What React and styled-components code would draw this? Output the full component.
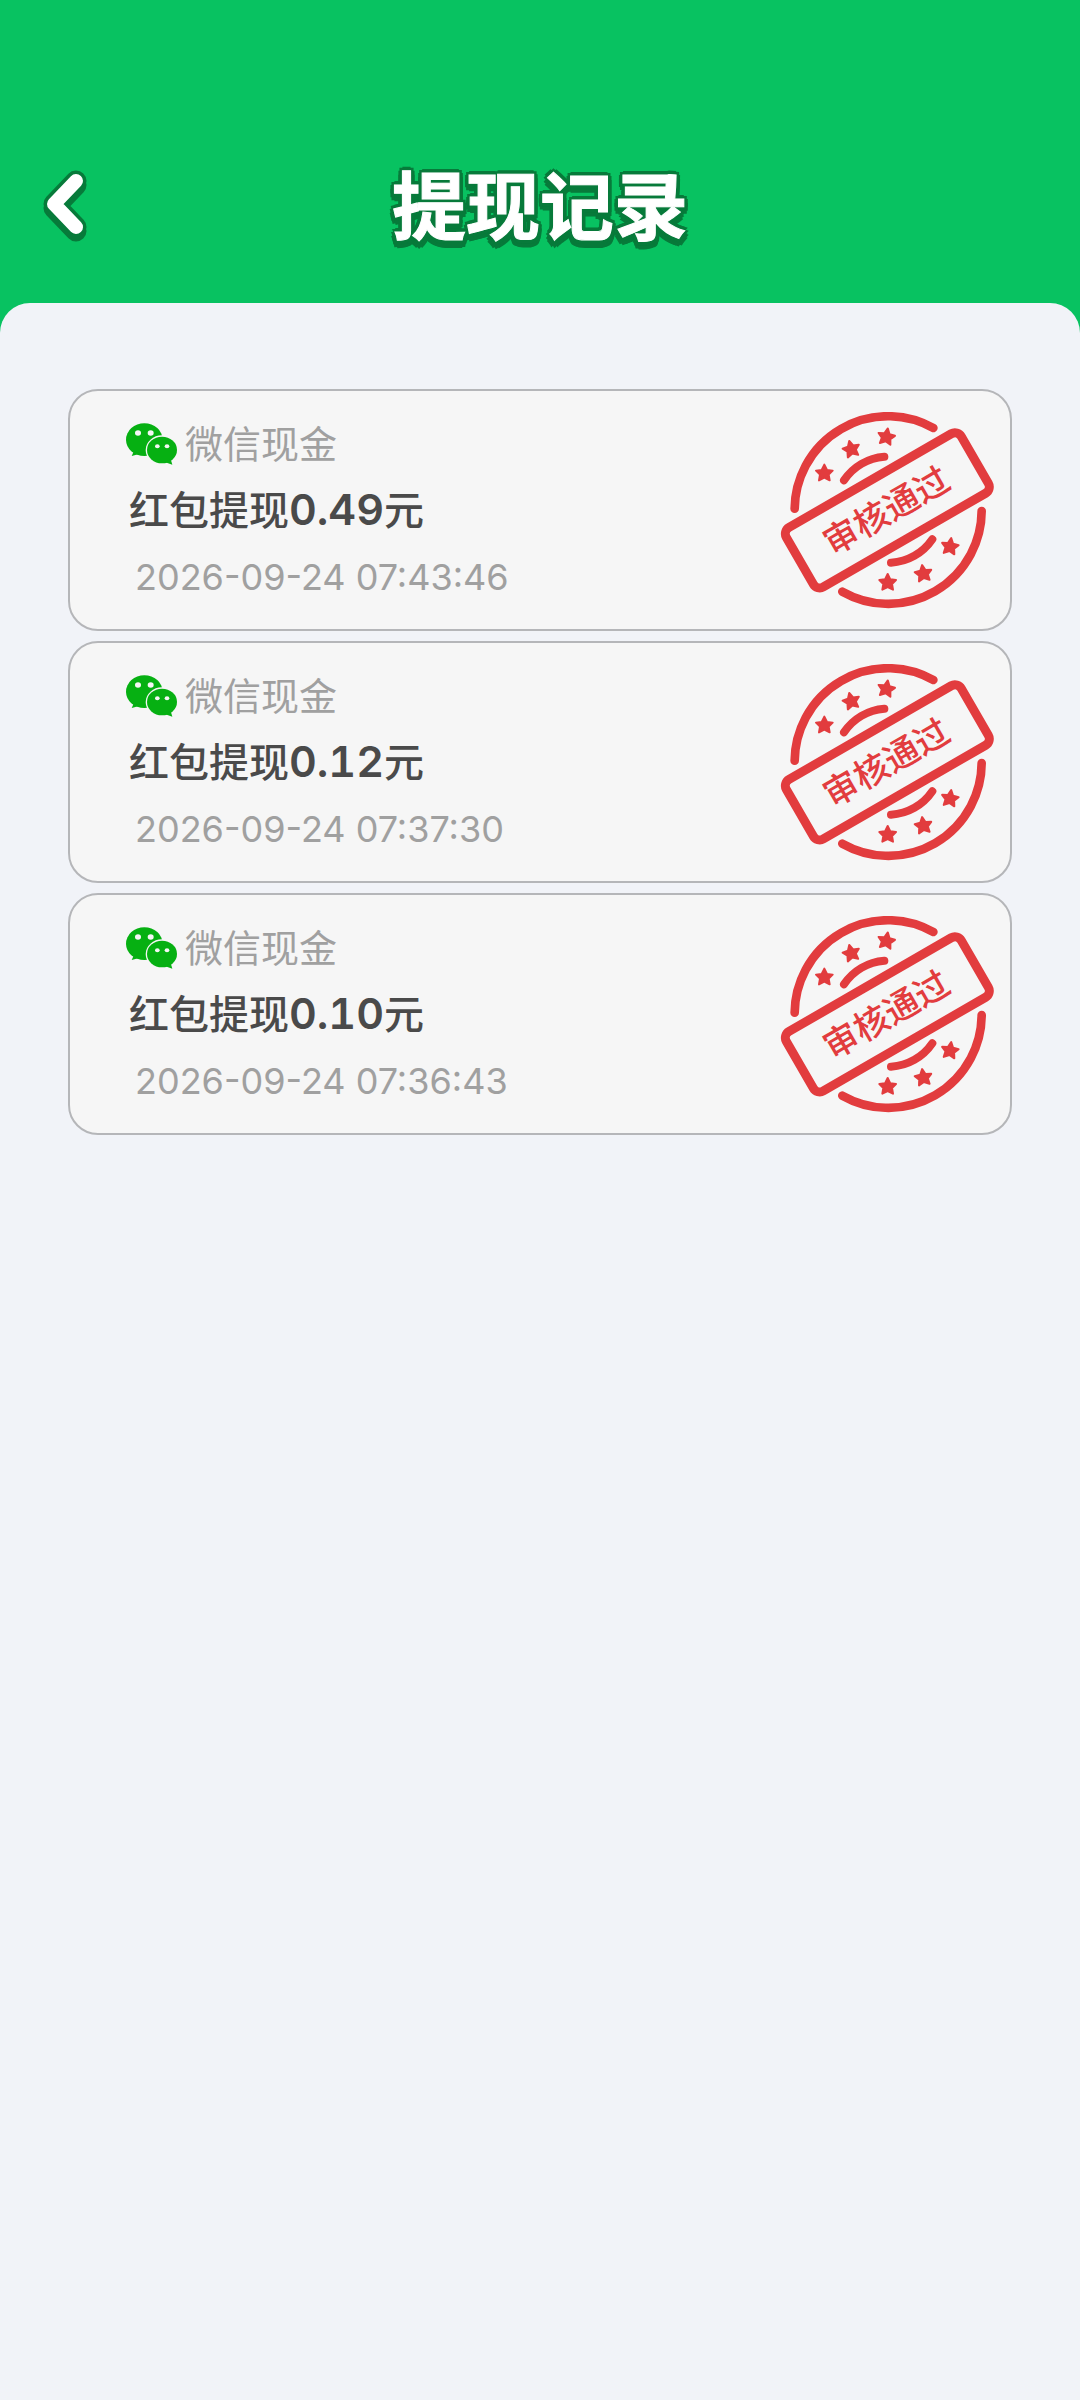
import React from 'react';
import styled, { createGlobalStyle } from 'styled-components';

const GlobalStyle = createGlobalStyle`
  * {
    box-sizing: border-box;
  }

  body {
    margin: 0;
    font-family: Inter, 'Noto Sans CJK SC', sans-serif;
  }
`;

const Page = styled.div`
  display: flex;
  flex-direction: column;
  min-height: 100vh;
  background: #08c261;
`;

const Header = styled.header`
  display: grid;
  grid-template-columns: 1fr auto 1fr;
  align-items: center;
  padding: 148px 43px 47px;
`;

const BackButton = styled.button`
  justify-self: start;
  display: flex;
  padding: 0;
  border: none;
  background: none;
  cursor: pointer;
`;

const Title = styled.h1`
  margin: 0;
  font-family: 'Noto Sans CJK SC', sans-serif;
  font-size: 74px;
  line-height: 108px;
  font-weight: 700;
  color: #fff;
  -webkit-text-stroke: 1px #fff;
  text-shadow:
    4px 0 #077a3a, -4px 0 #077a3a, 0 -4px #077a3a, 0 4px #077a3a,
    3px 3px #077a3a, -3px 3px #077a3a, 3px -3px #077a3a, -3px -3px #077a3a,
    4px 4px #077a3a, -4px 4px #077a3a, 0 8px #077a3a,
    3px 7px #077a3a, -3px 7px #077a3a;
`;

const Sheet = styled.main`
  flex: 1;
  padding: 86px 68px;
  border-radius: 30px 30px 0 0;
  background: #f1f3f8;
`;

const RecordList = styled.ul`
  display: flex;
  flex-direction: column;
  gap: 10px;
  margin: 0;
  padding: 0;
  list-style: none;
`;

const RecordCard = styled.li`
  display: flex;
  align-items: center;
  justify-content: space-between;
  padding: 19px 15px 19px 56px;
  border: 2px solid #b5b6b9;
  border-radius: 30px;
  background: #f6f6f6;
`;

const Method = styled.div`
  display: flex;
  align-items: center;
  gap: 8px;
  font-size: 38px;
  line-height: 68px;
  color: #a0a0a0;
`;

const Amount = styled.div`
  padding-left: 3px;
  font-size: 40px;
  line-height: 66px;
  font-weight: 500;
  color: #4a4a4a;
`;

const Figure = styled.span`
  font-size: 43px;
  line-height: 1;
  font-weight: 600;
  font-variant-numeric: tabular-nums;
`;

const Time = styled.time`
  display: block;
  padding-left: 9px;
  font-size: 36px;
  line-height: 66px;
  color: #a0a0a0;
`;

const StampText = styled.text`
  font-family: 'Noto Sans CJK SC', sans-serif;
  font-size: 104px;
  font-weight: 500;
  fill: #e23c3e;
  text-anchor: middle;
`;

const records = [
  { amount: '0.49', time: '2026-09-24 07:43:46' },
  { amount: '0.12', time: '2026-09-24 07:37:30' },
  { amount: '0.10', time: '2026-09-24 07:36:43' },
];

const stars = [
  { x: 193, y: 279, angle: 0 },
  { x: 274, y: 207, angle: -14 },
  { x: 379, y: 170, angle: 10 },
  { x: 570, y: 499, angle: 8 },
  { x: 490, y: 580, angle: -8 },
  { x: 383, y: 607, angle: 0 },
];

const BackIcon = () => (
  <svg width="44" height="80" viewBox="0 -8 44 80" fill="none" strokeLinecap="round" strokeLinejoin="round">
    <path d="M33 15L11 38L33 61M33 11L11 34L33 57" stroke="#077a3a" strokeWidth="21" />
    <path d="M33 11L11 34L33 57" stroke="#fff" strokeWidth="14" />
  </svg>
);

const WechatIcon = () => (
  <svg width="51" height="42" viewBox="0 0 153 126">
    <g fill="#06b012">
      <ellipse cx="55" cy="50" rx="55" ry="49" />
      <path d="M24 84L17 99L42 92Z" />
    </g>
    <ellipse cx="108" cy="81" rx="49" ry="44" fill="#f6f6f6" />
    <g fill="#06b012">
      <ellipse cx="108" cy="81" rx="45" ry="40" />
      <path d="M118 118L139 125L134 108Z" />
    </g>
    <g fill="#f6f6f6">
      <ellipse cx="36" cy="30" rx="9" ry="8" />
      <ellipse cx="74" cy="30" rx="9" ry="8" />
      <ellipse cx="94" cy="70" rx="7" ry="6" />
      <ellipse cx="123" cy="70" rx="7" ry="6" />
    </g>
  </svg>
);

const Stamp = () => (
  <svg width="215" height="197" viewBox="60 95 645 591" fill="none" stroke="#e23c3e" strokeLinecap="round">
    <path d="M104 385A280 280 0 0 1 520 143M665 392A280 280 0 0 1 247 634" strokeWidth="26" />
    <path d="M252 300A160 160 0 0 1 373 229M517 477A160 160 0 0 1 393 547" strokeWidth="24" />
    {stars.map((star) => (
      <path
        key={star.x}
        transform={`translate(${star.x} ${star.y}) rotate(${star.angle})`}
        d="M0 -26L8 -10L25 -8L13 4L16 21L0 13L-16 21L-13 4L-25 -8L-8 -10Z"
        fill="#e23c3e"
        strokeWidth="6"
        strokeLinejoin="round"
      />
    ))}
    <g transform="translate(382 390) rotate(-30)">
      <rect x="-303" y="-103" width="606" height="206" rx="22" strokeWidth="27" />
      <StampText x="-3" y="37" stroke="none">审核通过</StampText>
    </g>
  </svg>
);

const App = () => {
  return (
    <Page>
      <GlobalStyle />
      <Header>
        <BackButton type="button" aria-label="返回">
          <BackIcon />
        </BackButton>
        <Title>提现记录</Title>
      </Header>
      <Sheet>
        <RecordList>
          {records.map((record) => (
            <RecordCard key={record.time}>
              <div>
                <Method>
                  <WechatIcon />
                  微信现金
                </Method>
                <Amount>
                  红包提现<Figure>{record.amount}</Figure>元
                </Amount>
                <Time>{record.time}</Time>
              </div>
              <Stamp />
            </RecordCard>
          ))}
        </RecordList>
      </Sheet>
    </Page>
  );
};

export default App;
